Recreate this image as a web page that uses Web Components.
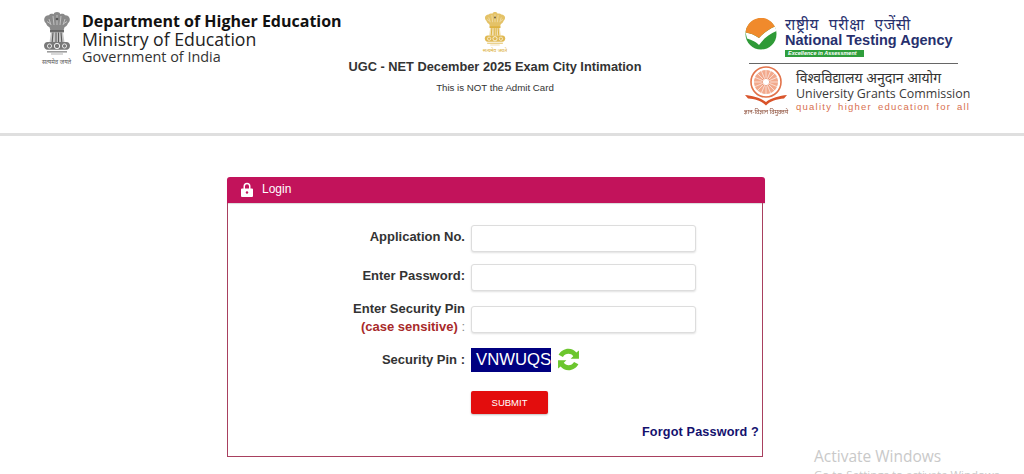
<!DOCTYPE html>
<html>
<head>
<meta charset="utf-8">
<title>UGC - NET December 2025 Exam City Intimation</title>
<style>
  html, body { margin: 0; padding: 0; background: #fff; }
  body { height: 474px; overflow: hidden; position: relative; font-family: "Liberation Sans", Arial, sans-serif; }
</style>
</head>
<body>
<site-header></site-header>
<login-panel></login-panel>
<activate-note></activate-note>

<script>
// state emblem, colour and motto size come from custom properties
class StateEmblem extends HTMLElement {
  constructor() {
    super();
    this.attachShadow({ mode: 'open' });
    this.shadowRoot.innerHTML = `
    <style>
      :host { display: block; color: var(--emblem, #555); line-height: 0; }
      svg { display: block; width: var(--art, 80%); margin: 0 auto; filter: blur(.35px); }
      .motto { display: block; margin-top: var(--motto-gap, 3px); text-align: center; white-space: nowrap; font: var(--motto, 6px)/var(--motto-lh, 8px) "Noto Sans", "Noto Sans Devanagari", "Liberation Sans", sans-serif; color: inherit; }
    </style>
    <svg viewBox="0 0 28 43" fill="currentColor">
      <path d="M14 0c1.800 0 3 .8 3.400 2.200C19 1.500 21 1.800 22 3.200c2-.3 4 1 4.600 3 .6 2.300-.2 4-1.600 5-.6 2-1.800 3.300-3.500 4l-1 3.300H7.500l-1-3.300C4.800 14.500 3.600 13.200 3 11.200 1.600 10.200.8 8.500 1.400 6.200 2 4.200 4 2.900 6 3.200 7 1.800 9 1.500 10.600 2.200 11 .8 12.200 0 14 0z" opacity=".72"/>
      <path d="M10 4l1 9M14 3v10M18 4l-1 9M6 7l2 6M22 7l-2 6M4 9.500l3 2M24 9.500l-3 2" stroke="#fff" stroke-width=".8" opacity=".6" fill="none"/>
      <circle cx="14" cy="7" r="1.300" fill="#222" opacity=".6"/>
      <rect x="7" y="18" width="14" height="2.400" opacity=".9"/>
      <path d="M8 20.500h12l1.500 9.500h-15z" opacity=".35"/>
      <path d="M10 20.500l-.8 9.500M13 20.500V30M15.500 20.500V30M18 20.500l.8 9.500" stroke="currentColor" stroke-width="1.100" fill="none"/>
      <path d="M4.500 30h19c2 0 3.500 1.700 3.500 3.800s-1.500 4-3.500 4h-19C2.500 37.800 1 36 1 33.800S2.500 30 4.500 30z" opacity=".82"/>
      <circle cx="14" cy="34" r="2.700" fill="none" stroke="#fff" stroke-width=".9"/>
      <circle cx="6.500" cy="34" r="2.100" fill="none" stroke="#fff" stroke-width=".8"/>
      <circle cx="21.500" cy="34" r="2.100" fill="none" stroke="#fff" stroke-width=".8"/>
      <rect x="4" y="39" width="20" height="1.600" opacity=".6"/>
      <rect x="8" y="41.400" width="12" height="1.200" opacity=".4"/>
    </svg>
    <span class="motto">सत्यमेव जयते</span>
    `;
  }
}
customElements.define('state-emblem', StateEmblem);

class SiteHeader extends HTMLElement {
  constructor() {
    super();
    this.attachShadow({ mode: 'open' });
    this.shadowRoot.innerHTML = `
    <style>
      :host { display: flex; height: 133px; border-bottom: 3px solid #dfdfdf; background: #fff; box-sizing: content-box; }
      .dept { display: flex; width: 340px; padding: 12px 0 0 39px; gap: 8px; box-sizing: content-box; font-family: "Open Sans", sans-serif; color: #222; }
      .dept state-emblem { width: 35px; flex: none; --emblem: #5c5c5c; }
      .dept div { white-space: nowrap; }
      .l1 { font-weight: 700; font-size: 16px; line-height: 18px; color: #111; }
      .l2 { font-size: 17.700px; line-height: 18px; }
      .l3 { font-size: 14.400px; line-height: 18px; color: #333; }
      .mid { width: 296px; margin-left: -32px; padding-top: 12px; text-align: center; color: #333; }
      .mid state-emblem { width: 25px; margin: 0 auto; --emblem: #d9aa2c; --art: 88%; --motto: 5px; --motto-lh: 7px; --motto-gap: 1px; }
      h1 { margin: 5px 0 0; font-size: 12.800px; line-height: 16px; font-weight: 700; white-space: nowrap; }
      p { margin: 6px 0 0; font-size: 9.700px; line-height: 14px; }
      .logos { margin-left: 101px; padding-top: 17px; width: 230px; }
      .nta { display: flex; gap: 8px; height: 45px; padding-left: 1px; }
      .nta svg { width: 32px; height: 32px; margin-top: 1px; flex: none; filter: blur(.3px); }
      .nta .hi { font: 15.500px/15px "Noto Sans", "Noto Sans Devanagari", sans-serif; color: #27306e; letter-spacing: .6px; word-spacing: 5px; white-space: nowrap; }
      .nta b { display: block; font-size: 14.500px; line-height: 17px; color: #27306e; white-space: nowrap; }
      .tag { display: block; width: 79px; height: 7px; margin-top: 1px; background: #2f9e3c; color: #fff; font: italic 700 5.500px/7px "Liberation Sans", sans-serif; padding-left: 3px; box-sizing: border-box; white-space: nowrap; }
      hr { width: 209px; height: 1px; margin: 1px 0 0 5px; border: 0; background: #666; }
      .ugc { display: flex; gap: 7px; padding-top: 2px; }
      .ugc svg { width: 45px; height: 50px; flex: none; filter: blur(.3px); }
      .ugc > div { padding-top: 4px; }
      .ugc .hi { font: 14px/16px "Noto Sans", "Noto Sans Devanagari", sans-serif; color: #333; white-space: nowrap; }
      .ugc b { display: block; font-family: "Open Sans", sans-serif; font-weight: 400; font-size: 12.400px; line-height: 15px; color: #3a3a3a; white-space: nowrap; }
      .ugc i { display: block; font: 400 9.500px/12px "Liberation Sans", sans-serif; color: #d8704f; letter-spacing: 1.250px; word-spacing: 2px; white-space: nowrap; }
    </style>
    <div class="dept">
      <state-emblem></state-emblem>
      <div>
        <div class="l1">Department of Higher Education</div>
        <div class="l2">Ministry of Education</div>
        <div class="l3">Government of India</div>
      </div>
    </div>
    <div class="mid">
      <state-emblem></state-emblem>
      <h1>UGC - NET December 2025 Exam City Intimation</h1>
      <p>This is NOT the Admit Card</p>
    </div>
    <div class="logos">
      <div class="nta">
        <svg viewBox="0 0 32 32">
          <circle cx="16" cy="16" r="15.500" fill="#2f9a37"/>
          <path d="M2 20.500C4 21 10 23 14 27 19 20 25 15.500 31.500 13L30 8.500C25 10.500 19 14.500 14 20 10 17 5 15 .6 14.500z" fill="#fff"/>
          <path d="M.6 14.500A15.500 15.500 0 0 1 30 8.500C25 10.500 19 14.500 14 20 10 17 5 15 .6 14.500z" fill="#f08a2c"/>
        </svg>
        <div>
          <div class="hi">राष्ट्रीय परीक्षा एजेंसी</div>
          <b>National Testing Agency</b>
          <span class="tag">Excellence in Assessment</span>
        </div>
      </div>
      <hr>
      <div class="ugc">
        <svg viewBox="0 0 45 50" fill="none" stroke="#e2734a">
          <circle cx="22" cy="16" r="15" stroke-width="1.600"/>
          <circle cx="22" cy="16" r="12" fill="#f2a98c" stroke="none"/>
          <circle cx="22" cy="16" r="3" fill="#fff" stroke="none"/>
          <circle cx="22" cy="16" r="3.800" stroke-width=".8"/>
          <path d="M22 3v26M9 16h26M12.800 6.800l18.400 18.400M31.200 6.800L12.800 25.200M17 4l10 24M27 4l-10 24M10 11l24 10M34 11l-24 10" stroke="#fff" stroke-width=".6"/>
          <path d="M1 29c7 .5 16 3 21 7 5-4 14-6.500 21-7l-3 3.500c-7 .5-14 2.500-18 7-4-4.500-11-6.500-18-7z" fill="#d9542b" stroke="none"/>
          <text x="22" y="48" text-anchor="middle" fill="#8a4a35" stroke="none" font-size="6" font-family="Noto Sans, sans-serif">ज्ञान-विज्ञान विमुक्तये</text>
        </svg>
        <div>
          <div class="hi">विश्वविद्यालय अनुदान आयोग</div>
          <b>University Grants Commission</b>
          <i>quality higher education for all</i>
        </div>
      </div>
    </div>
    `;
  }
}
customElements.define('site-header', SiteHeader);

class FormRow extends HTMLElement {
  constructor() {
    super();
    this.attachShadow({ mode: 'open' });
    this.shadowRoot.innerHTML = `
    <style>
      :host { display: grid; grid-template-columns: 237px auto; column-gap: 6px; align-items: center; justify-content: start; }
      .lbl { text-align: right; font-size: 13px; line-height: 18px; font-weight: 700; color: #333; padding-bottom: var(--lift, 0); }
    </style>
    <div class="lbl"><slot name="label"></slot></div>
    <div class="ctl"><slot></slot></div>
    `;
  }
}
customElements.define('form-row', FormRow);

class TextBox extends HTMLElement {
  constructor() {
    super();
    this.attachShadow({ mode: 'open' });
    this.shadowRoot.innerHTML = `
    <style>
      :host { display: block; }
      input { display: block; width: 225px; height: 27px; box-sizing: border-box; border: 1px solid #ddd; border-radius: 3px; background: #fff; box-shadow: 0 1px 2px rgba(0,0,0,.12); padding: 0 6px; outline: 0; }
    </style>
    <input type="text">
    `;
  }
}
customElements.define('text-box', TextBox);

class LoginPanel extends HTMLElement {
  constructor() {
    super();
    this.attachShadow({ mode: 'open' });
    this.shadowRoot.innerHTML = `
    <style>
      :host { display: block; width: 538px; margin: 41px 0 0 227px; }
      .head { display: flex; align-items: center; gap: 9px; height: 26px; padding: 0 0 2px 14px; background: #c2135b; border-radius: 3px 3px 0 0; color: #fff; font-size: 12px; box-sizing: border-box; box-shadow: 0 1px 1px rgba(0,0,0,.15); }
      .head svg { width: 12px; height: 15px; }
      .body { height: 254px; box-sizing: border-box; width: 536px; border: 1px solid #a8405f; border-top: 0; padding-top: 22px; display: flex; flex-direction: column; }
      form-row + form-row { margin-top: 12px; }
      .sens { color: #a82a2a; }
      .colon { color: #888; font-weight: 400; }
      .pin { display: flex; align-items: center; gap: 5px; }
      .captcha { display: block; width: 80px; height: 24px; box-sizing: border-box; padding-left: 5px; background: #000080; color: #fff; font-size: 16.700px; line-height: 24px; overflow: hidden; white-space: nowrap; }
      .pin svg { width: 25px; height: 25px; filter: blur(.3px); }
      button { display: block; margin: 0 0 0 243px; width: 77px; height: 23px; border: 0; border-radius: 2px; background: #e30d0d; color: #fff; font: 9.500px "Liberation Sans", sans-serif; padding: 0; box-shadow: 0 1px 2px rgba(0,0,0,.25); }
      a { align-self: flex-end; margin: 10px 3px 0 0; color: #14116e; font-size: 12.650px; line-height: 16px; font-weight: 700; text-decoration: none; letter-spacing: .15px; }
    </style>
    <div class="head">
      <svg viewBox="0 0 12 15">
        <path d="M2.500 7V4.200a3.500 3.500 0 0 1 7 0V7H8V4.200a2 2 0 0 0-4 0V7z" fill="#fff"/>
        <path d="M1 6.500h10a1 1 0 0 1 1 1V14a1 1 0 0 1-1 1H1a1 1 0 0 1-1-1V7.500a1 1 0 0 1 1-1z" fill="#fff"/>
        <circle cx="6" cy="10.500" r="1.200" fill="#c2135b"/>
      </svg>
      <span>Login</span>
    </div>
    <div class="body">
      <form-row style="--lift:4px"><span slot="label">Application No.</span><text-box></text-box></form-row>
      <form-row style="--lift:4px"><span slot="label">Enter Password:</span><text-box></text-box></form-row>
      <form-row style="margin-top:9px">
        <span slot="label">Enter Security Pin<br><span class="sens">(case sensitive)</span> <span class="colon">:</span></span>
        <text-box style="margin-top:2px"></text-box>
      </form-row>
      <form-row style="margin-top:11px">
        <span slot="label">Security Pin :</span>
        <div class="pin">
          <span class="captcha">VNWUQS</span>
          <svg viewBox="0 0 27 26" fill="#6cc62e">
            <path d="M13.500 1.500c3.500 0 6.500 1.500 8.500 4l2.800-2.300v9h-9l2.800-2.700c-1.300-1.700-3-2.600-5.100-2.600-2.500 0-4.800 1.300-6 3.500L2.800 8C4.900 4.100 9 1.500 13.500 1.500z"/>
            <path d="M13.500 24.500c-3.500 0-6.500-1.500-8.500-4l-2.800 2.300v-9h9l-2.800 2.700c1.300 1.700 3 2.600 5.100 2.600 2.500 0 4.800-1.300 6-3.500l4.700 2.400c-2.100 3.900-6.200 6.500-10.700 6.500z"/>
          </svg>
        </div>
      </form-row>
      <button type="button" style="margin-top:19px">SUBMIT</button>
      <a href="#">Forgot Password ?</a>
    </div>
    `;
  }
}
customElements.define('login-panel', LoginPanel);

// windows watermark, sits over the page
class ActivateNote extends HTMLElement {
  constructor() {
    super();
    this.attachShadow({ mode: 'open' });
    this.shadowRoot.innerHTML = `
    <style>
      :host { position: absolute; left: 814px; top: 447px; font-family: "Open Sans", sans-serif; color: #c9c9c9; white-space: nowrap; }
      .a { font-size: 15.500px; line-height: 19px; }
      .b { font-size: 11.500px; line-height: 16px; margin-top: 1px; }
    </style>
    <div class="a">Activate Windows</div>
    <div class="b">Go to Settings to activate Windows.</div>
    `;
  }
}
customElements.define('activate-note', ActivateNote);
</script>
</body>
</html>
